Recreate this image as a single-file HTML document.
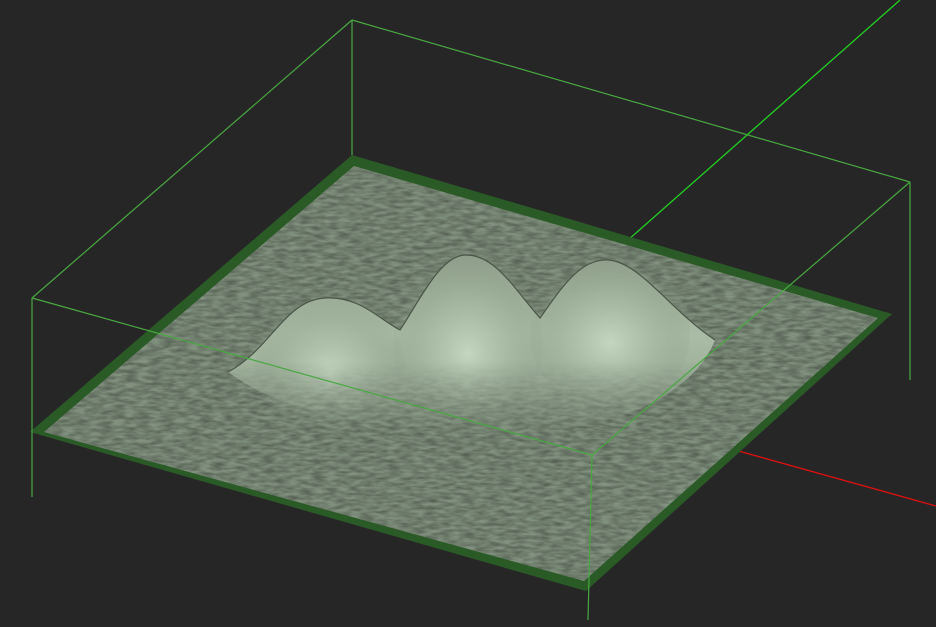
<!DOCTYPE html>
<html><head><style>
html,body{margin:0;padding:0;background:#262626;width:936px;height:627px;overflow:hidden}
</style></head><body>
<svg width="936" height="627" viewBox="0 0 936 627" xmlns="http://www.w3.org/2000/svg">
<defs>
<filter id="n" x="0" y="0" width="100%" height="100%">
<feTurbulence type="fractalNoise" baseFrequency="0.08 0.3" numOctaves="2" seed="3"/>
<feColorMatrix values="0 0 0 0 0  0 0 0 0 0  0 0 0 0 0  0 0 0 -1.2 0.9"/>
<feComposite in2="SourceGraphic" operator="in"/>
</filter>
<radialGradient id="b" cx="0.5" cy="0.55" r="0.55">
<stop offset="0" stop-color="#c4d6c0"/>
<stop offset="0.6" stop-color="#a2b49e" stop-opacity="0.7"/>
<stop offset="1" stop-color="#8a9a86" stop-opacity="0"/>
</radialGradient>
<linearGradient id="m" x1="0" y1="0" x2="0" y2="1">
<stop offset="0" stop-color="#8e9e8a"/>
<stop offset="0.45" stop-color="#aabca6"/>
<stop offset="1" stop-color="#8e9e8a"/>
</linearGradient>
<linearGradient id="fg" x1="0" y1="0" x2="0" y2="1">
<stop offset="0" stop-color="#fff"/>
<stop offset="0.6" stop-color="#fff"/>
<stop offset="1" stop-color="#000"/>
</linearGradient>
<mask id="fm"><rect x="200" y="250" width="540" height="185" fill="url(#fg)"/></mask>
</defs>
<line x1="628" y1="240" x2="900" y2="0" stroke="#22d022" stroke-width="1.3"/>
<line x1="735" y1="450" x2="936" y2="506" stroke="#e01010" stroke-width="1.3"/>
<g stroke="#48a840" stroke-width="1.2" fill="none">
<line x1="352" y1="20" x2="352" y2="155"/>
<line x1="910" y1="182" x2="910" y2="380"/>
<line x1="352" y1="20" x2="910" y2="182"/>
<line x1="352" y1="20" x2="32" y2="298"/>
</g>
<polygon points="352,155 892,314 586,591 30,432" fill="#2a5a26"/>
<polygon points="354,166 878,318 584,581 44,432" fill="#82927f"/>
<polygon points="354,166 878,318 584,581 44,432" fill="#5a6858" filter="url(#n)" opacity="0.45"/>
<g mask="url(#fm)">
<path d="M228,372 C270,350 285,300 325,298 C360,296 380,320 400,330 C420,300 440,256 465,255 C495,254 515,290 540,318 C560,290 580,258 608,260 C640,262 670,310 715,340 C700,380 640,430 520,432 C420,434 300,425 228,372Z" fill="url(#m)"/>
<ellipse cx="330" cy="365" rx="75" ry="70" fill="url(#b)"/>
<ellipse cx="468" cy="345" rx="75" ry="85" fill="url(#b)"/>
<ellipse cx="610" cy="335" rx="80" ry="75" fill="url(#b)"/>
</g>
<path d="M228,372 C270,350 285,300 325,298 C360,296 380,320 400,330 C420,300 440,256 465,255 C495,254 515,290 540,318 C560,290 580,258 608,260 C640,262 670,310 715,340" fill="none" stroke="#4a5648" stroke-width="1.2"/>
<g stroke="#48a840" stroke-width="1.2" fill="none">
<line x1="32" y1="298" x2="32" y2="497"/>
<line x1="32" y1="298" x2="592" y2="455"/>
<line x1="592" y1="455" x2="910" y2="182"/>
<line x1="592" y1="455" x2="588" y2="620"/>
</g>
</svg>
</body></html>
